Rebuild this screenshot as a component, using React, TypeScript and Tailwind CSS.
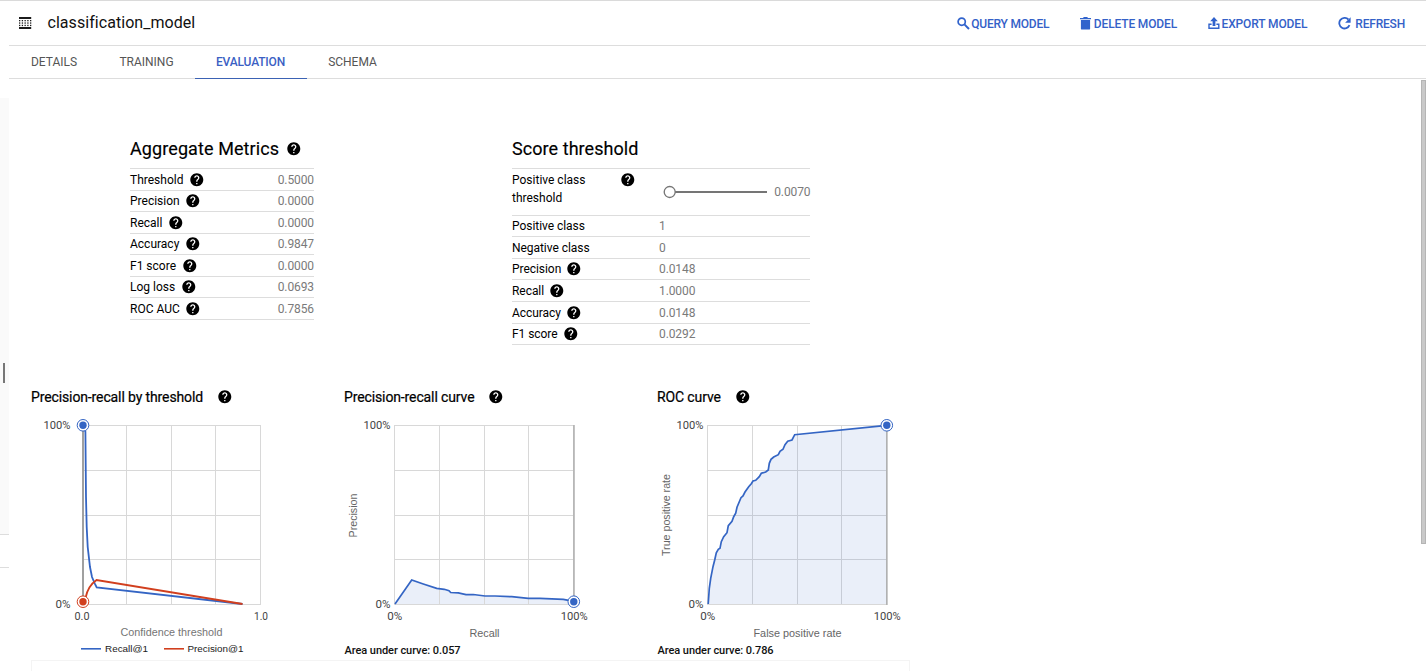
import React from "react";
import { MdHelp } from "react-icons/md";

const BLUE = "#3465c4";
const RED = "#d13f1e";

function Help({ className = "" }: { className?: string }) {
  return <MdHelp className={`size-[15.6px] shrink-0 text-black ${className}`} />;
}

function ModelIcon() {
  return (
    <svg width="13" height="13" viewBox="0 0 13 13" fill="#1c1c1c">
      <rect x="0" y="0" width="12.2" height="2" />
      <rect x="0" y="10" width="12.2" height="2" />
      {[3, 5.4, 7.8].map((y) =>
        [0, 2.75, 5.5, 8.25, 11].map((x) => <rect key={`${x}-${y}`} x={x} y={y} width="1.3" height="1.3" />)
      )}
    </svg>
  );
}

function SearchIcon() {
  return (
    <svg width="13" height="13" viewBox="0 0 13 13" fill="none" stroke="#3163cc">
      <circle cx="4.7" cy="4.7" r="3.6" strokeWidth="1.7" />
      <path d="M7.4 7.4 L12 12" strokeWidth="2" />
    </svg>
  );
}

function TrashIcon() {
  return (
    <svg width="11" height="13" viewBox="0 0 11 13" fill="#3163cc">
      <path d="M0 0.9 H3 L3.8 0 H7.2 L8 0.9 H11 V2.2 H0 Z" />
      <path d="M0.9 3 H10.1 V11.4 Q10.1 12.6 8.9 12.6 H2.1 Q0.9 12.6 0.9 11.4 Z" />
    </svg>
  );
}

function ExportIcon() {
  return (
    <svg width="12" height="13" viewBox="0 0 12 13" fill="#3163cc">
      <path d="M6 0 L9.8 4.2 H7.4 V9 H4.6 V4.2 H2.2 Z" />
      <path d="M0.3 6.6 H3.6 V8 H1.7 V10.5 H10.1 V8 H8.4 V6.6 H11.5 V12 H0.3 Z" />
    </svg>
  );
}

function RefreshIcon() {
  return (
    <svg width="13" height="13" viewBox="0 0 13 13">
      <path d="M10.4 2.5 A5.3 5.3 0 1 0 11.5 8.2" fill="none" stroke="#3163cc" strokeWidth="1.8" />
      <path d="M12.6 0.2 V5.7 H7.1 Z" fill="#3163cc" />
    </svg>
  );
}

function Action({ icon, label, className }: { icon: React.ReactNode; label: string; className: string }) {
  return (
    <button className={`flex items-center whitespace-nowrap text-[12px] font-medium text-[#3461c8] ${className}`}>
      {icon}
      <span className="pt-px">{label}</span>
    </button>
  );
}

function Tab({ label, className, active }: { label: string; className: string; active?: boolean }) {
  return (
    <div
      className={`-mb-px flex h-[33px] items-center justify-center border-b pb-px text-[12px] ${
        active ? "border-[#3b62b4] pr-px font-medium tracking-[-0.15px] text-[#3b5fc4]" : "border-transparent text-[#555]"
      } ${className}`}
    >
      {label}
    </div>
  );
}

type Metric = { label: string; value: string; help?: boolean; h: string };

const aggregate: Metric[] = [
  { label: "Threshold", value: "0.5000", help: true, h: "h-[22px]" },
  { label: "Precision", value: "0.0000", help: true, h: "h-[21px]" },
  { label: "Recall", value: "0.0000", help: true, h: "h-[22px]" },
  { label: "Accuracy", value: "0.9847", help: true, h: "h-[21px]" },
  { label: "F1 score", value: "0.0000", help: true, h: "h-[22px]" },
  { label: "Log loss", value: "0.0693", help: true, h: "h-[21px]" },
  { label: "ROC AUC", value: "0.7856", help: true, h: "h-[22px]" },
];

const score: Metric[] = [
  { label: "Positive class", value: "1", h: "h-[21px]" },
  { label: "Negative class", value: "0", h: "h-[22px]" },
  { label: "Precision", value: "0.0148", help: true, h: "h-[21px]" },
  { label: "Recall", value: "1.0000", help: true, h: "h-[22px]" },
  { label: "Accuracy", value: "0.0148", help: true, h: "h-[22px]" },
  { label: "F1 score", value: "0.0292", help: true, h: "h-[21px]" },
];

function Grid({ xs }: { xs: number[] }) {
  const ys = [425, 470, 515, 559, 604];
  return (
    <g fill="#d8d8d8" shapeRendering="crispEdges">
      {xs.map((x) => (
        <rect key={x} x={x} y={425} width={1} height={180} />
      ))}
      {ys.map((y) => (
        <rect key={y} x={xs[0]} y={y} width={xs[4] - xs[0] + 1} height={1} />
      ))}
    </g>
  );
}

function Marker({ x, y, color }: { x: number; y: number; color: string }) {
  return (
    <g>
      <circle cx={x} cy={y} r={5.8} fill="#fff" stroke={color} strokeWidth={1} />
      <circle cx={x} cy={y} r={3.7} fill={color} />
    </g>
  );
}

type LabelProps = {
  x: number;
  y: number;
  w: number;
  children: string;
  fill?: string;
  anchor?: "start" | "middle" | "end";
  transform?: string;
  className?: string;
  size?: number;
};

function Label({ x, y, w, children, fill = "#444", anchor = "middle", transform, className, size = 11 }: LabelProps) {
  return (
    <text
      x={x}
      y={y}
      textLength={w}
      lengthAdjust="spacingAndGlyphs"
      textAnchor={anchor}
      fill={fill}
      fontSize={size}
      transform={transform}
      className={className}
    >
      {children}
    </text>
  );
}

function AxisTitle(props: LabelProps) {
  return <Label fill="#666" className="font-['Liberation_Sans',Arial,sans-serif]" {...props} />;
}

function ThresholdChart() {
  return (
    <svg className="block" width="313" height="250" viewBox="31 410 313 250">
      <Grid xs={[82, 126, 171, 215, 260]} />
      <rect x="82" y="425" width="2" height="180" fill="#a0a0a0" />
      <path
        d="M83 425 L85.4 431.7 L86 497 L86.7 527 L87.7 547 L90 567 L92 577 L94.7 583.3 L96.7 587.3 L242.5 604"
        fill="none"
        stroke={BLUE}
        strokeWidth="1.8"
      />
      <path d="M83 601.7 L85.7 597.3 Q88 586 96.5 580 L242.5 604" fill="none" stroke={RED} strokeWidth="1.8" />
      <Marker x={83} y={425.3} color={BLUE} />
      <Marker x={83} y={601.7} color={RED} />
      <Label x={70.5} y={429} w={27} anchor="end">100%</Label>
      <Label x={70.5} y={608} w={15} anchor="end">0%</Label>
      <Label x={82} y={620} w={15}>0.0</Label>
      <Label x={261} y={620} w={14}>1.0</Label>
      <AxisTitle x={171.5} y={636} w={102} fill="#757575">Confidence threshold</AxisTitle>
      <rect x="81" y="648" width="20" height="1.6" fill={BLUE} />
      <AxisTitle x={105} y={652} w={43} anchor="start" fill="#222" size={9.6}>Recall@1</AxisTitle>
      <rect x="164" y="648" width="20" height="1.6" fill={RED} />
      <AxisTitle x={187.5} y={652} w={56} anchor="start" fill="#222" size={9.6}>Precision@1</AxisTitle>
    </svg>
  );
}

const prCurve =
  "M395 604 L411.7 580 L423.3 584 L436.7 588.4 L444.3 589.3 L449 590.7 L450.7 592.5 L458.3 592.8 L466 594.7 L473.3 594.5 L485 596 L495 596 L511.7 596.7 L528.3 598.3 L540 598.3 L563.3 599.3 L573.7 601.3";

function PrecisionRecallChart() {
  return (
    <svg className="block" width="313" height="230" viewBox="344 410 313 230">
      <path d={`${prCurve} V604 H395 Z`} fill={BLUE} fillOpacity="0.1" />
      <Grid xs={[394, 439, 484, 528, 573]} />
      <rect x="573.3" y="425" width="1.4" height="180" fill="#aaa" />
      <path d={prCurve} fill="none" stroke={BLUE} strokeWidth="1.7" />
      <Marker x={573.8} y={601.7} color={BLUE} />
      <Label x={390.5} y={429} w={27} anchor="end">100%</Label>
      <Label x={390.5} y={608} w={15} anchor="end">0%</Label>
      <Label x={394.8} y={620} w={15}>0%</Label>
      <Label x={574.3} y={620} w={27}>100%</Label>
      <AxisTitle x={484.5} y={637} w={30}>Recall</AxisTitle>
      <AxisTitle x={0} y={0} w={44} transform="translate(357 515.5) rotate(-90)">Precision</AxisTitle>
    </svg>
  );
}

const rocCurve =
  "M708.2 604 L709.3 588.3 L710.7 578.3 L713 566.7 L714.7 560 L716.3 552.7 L718.3 549.3 L720 548.3 L721.3 541.7 L723.7 536.7 L727 532.7 L728.3 525.7 L732 521.3 L733.7 516.7 L735.7 513.3 L737 507.3 L739.3 501.7 L741 497.7 L743 496 L745 492 L748.7 486.7 L751.3 483.7 L753 481 L755.7 480.3 L759.3 476.7 L761.3 473.3 L765.7 472 L768.3 470 L769.3 463.3 L771 459.3 L773.7 457 L778.3 454.7 L780 451.3 L783 449.3 L785 444.7 L787.7 441.3 L792 440 L794.7 434.7 L886.7 425.3";

function RocChart() {
  return (
    <svg className="block" width="313" height="230" viewBox="657 410 313 230">
      <Grid xs={[707, 752, 797, 841, 886]} />
      <path d={`${rocCurve} V604 H708 Z`} fill={BLUE} fillOpacity="0.1" />
      <rect x="886.2" y="425" width="1.4" height="180" fill="#aaa" />
      <path d={rocCurve} fill="none" stroke={BLUE} strokeWidth="1.7" />
      <Marker x={886.8} y={425.3} color={BLUE} />
      <Label x={703.5} y={429} w={27} anchor="end">100%</Label>
      <Label x={703.5} y={608} w={15} anchor="end">0%</Label>
      <Label x={707.8} y={620} w={15}>0%</Label>
      <Label x={887.3} y={620} w={27}>100%</Label>
      <AxisTitle x={797.5} y={637} w={88}>False positive rate</AxisTitle>
      <AxisTitle x={0} y={0} w={82} transform="translate(670 515) rotate(-90)">True positive rate</AxisTitle>
    </svg>
  );
}

function ChartPanel({ title, auc, children }: { title: string; auc?: string; children: React.ReactNode }) {
  return (
    <section className="w-[313px] shrink-0">
      <div className="flex h-[26px] items-center gap-[14px] leading-none">
        <h3 className="text-[14px] tracking-[-0.12px] whitespace-nowrap text-black [-webkit-text-stroke:0.2px_#000]">{title}</h3>
        <Help />
      </div>
      {children}
      {auc && (
        <p className="pt-[3px] pl-[0.5px] text-[11px] leading-[15px] font-medium tracking-[-0.06px] text-[#111]">
          Area under curve: {auc}
        </p>
      )}
    </section>
  );
}

export default function App() {
  return (
    <div className="flex h-[671px] w-full overflow-hidden border-t border-[#dadada] bg-white font-['Roboto',sans-serif] text-black">
      <aside className="flex w-[9px] shrink-0 flex-col pt-[97px]">
        <div className="flex h-[437px] items-center border-b border-[#ddd] bg-[#fafafa] pt-[114px] pl-[3px]">
          <div className="h-5 w-[2px] bg-[#777]" />
        </div>
        <div className="h-[33px] border-b border-[#ddd]" />
      </aside>
      <main className="flex min-w-0 grow flex-col">
        <header className="flex h-[45px] shrink-0 items-center border-b border-[#ddd] pr-[21px] pl-[10px]">
          <ModelIcon />
          <h1 className="ml-[15.5px] text-[16px] tracking-[0.05px] text-[#111]">classification_model</h1>
          <div className="ml-auto flex items-center">
            <Action className="mr-[31px] gap-[1.5px] tracking-[-0.2px]" icon={<SearchIcon />} label="QUERY MODEL" />
            <Action className="mr-[31px] gap-[2.5px] tracking-[-0.15px]" icon={<TrashIcon />} label="DELETE MODEL" />
            <Action className="mr-[30.5px] gap-[1.5px] tracking-[-0.12px]" icon={<ExportIcon />} label="EXPORT MODEL" />
            <Action className="gap-[4.5px] tracking-[-0.2px]" icon={<RefreshIcon />} label="REFRESH" />
          </div>
        </header>
        <nav className="flex h-[33px] shrink-0 border-b border-[#ddd]">
          <Tab label="DETAILS" className="w-[89px] pl-px" />
          <Tab label="TRAINING" className="w-[97px]" />
          <Tab label="EVALUATION" className="w-[112px]" active />
          <Tab label="SCHEMA" className="w-[91px]" />
        </nav>
        <div className="flex min-h-0 grow">
          <div className="flex min-w-0 grow flex-col pt-[57px]">
            <div className="flex h-[248px] shrink-0 pl-[121px]">
              <section className="w-[184px]">
                <div className="flex h-[33px] items-center gap-[7px] border-b border-[#ddd] pb-[6px]">
                  <h2 className="text-[18px] leading-none tracking-[0.09px] whitespace-nowrap [-webkit-text-stroke:0.15px_#000]">
                    Aggregate Metrics
                  </h2>
                  <Help className="-mt-px" />
                </div>
                {aggregate.map((m) => (
                  <div key={m.label} className={`flex items-center justify-between border-b border-[#ddd] text-[12px] ${m.h}`}>
                    <span className="flex items-center gap-[5.5px]">
                      {m.label}
                      <Help />
                    </span>
                    <span className="tracking-[-0.1px] text-[#7a7a7a]">{m.value}</span>
                  </div>
                ))}
              </section>
              <section className="ml-[198px] w-[298px]">
                <div className="flex h-[33px] items-center border-b border-[#ddd] pb-[6px]">
                  <h2 className="text-[18px] leading-none tracking-[0.06px] whitespace-nowrap [-webkit-text-stroke:0.15px_#000]">
                    Score threshold
                  </h2>
                </div>
                <div className="flex h-[47px] border-b border-[#ddd] text-[12px] leading-[18px]">
                  <span className="w-[107.5px] pt-[2px] pr-6">Positive class threshold</span>
                  <Help className="mt-[2.5px]" />
                  <svg className="mt-[15px] ml-[27.9px] shrink-0" width="104" height="16" viewBox="0 0 104 16">
                    <path d="M12 8 H104" stroke="#757575" strokeWidth="1.8" />
                    <circle cx="6.7" cy="8" r="5.5" fill="#fff" stroke="#757575" strokeWidth="1.3" />
                  </svg>
                  <span className="-mr-[0.5px] ml-auto pt-[14px] tracking-[-0.1px] text-[#7a7a7a]">0.0070</span>
                </div>
                {score.map((m) => (
                  <div key={m.label} className={`flex items-center border-b border-[#ddd] text-[12px] ${m.h}`}>
                    <span className="flex w-[147px] items-center gap-[5px]">
                      <span className="tracking-[-0.05px]">{m.label}</span>
                      {m.help && <Help />}
                    </span>
                    <span className="tracking-[-0.1px] text-[#7a7a7a]">{m.value}</span>
                  </div>
                ))}
              </section>
            </div>
            <div className="flex shrink-0 pl-[22px]">
              <ChartPanel title="Precision-recall by threshold">
                <ThresholdChart />
              </ChartPanel>
              <ChartPanel title="Precision-recall curve" auc="0.057">
                <PrecisionRecallChart />
              </ChartPanel>
              <ChartPanel title="ROC curve" auc="0.786">
                <RocChart />
              </ChartPanel>
            </div>
            <div className="ml-[22px] h-5 w-[879px] shrink-0 border border-[#f4f4f4]" />
          </div>
          <div className="w-[5px] shrink-0 pt-px">
            <div className="h-[464px] border border-[#b5b5b5] bg-[#c9c9c9]" />
          </div>
        </div>
      </main>
    </div>
  );
}
